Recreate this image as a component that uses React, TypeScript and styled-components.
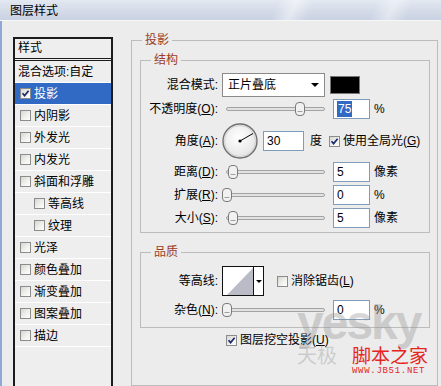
import styled, { createGlobalStyle } from 'styled-components';

const GlobalStyle = createGlobalStyle`
  html, body {
    margin: 0;
    padding: 0;
    background: #ececec;
  }
  body {
    font-family: "Liberation Sans", "Noto Sans CJK SC", sans-serif;
    font-size: 12px;
    color: #000;
  }
  * {
    box-sizing: border-box;
  }
`;

const Window = styled.div`
  position: relative;
  width: 441px;
  height: 386px;
  overflow: hidden;
  background: #ececec;
`;

const TitleBar = styled.div`
  height: 21px;
  padding: 1px 0 0 10px;
  line-height: 20px;
  border-bottom: 1px solid #f7f7f7;
  background:
    linear-gradient(
      112deg,
      transparent 0 62%,
      rgba(255, 255, 255, 0.45) 66%,
      transparent 70% 84%,
      rgba(255, 255, 255, 0.4) 88%,
      transparent 92%
    ),
    linear-gradient(180deg, #e3e8f1 0%, #d4dbe8 55%, #c9d2e3 100%);
`;

const Body = styled.div`
  display: flex;
  height: 365px;
  padding: 12px 0 0 11px;
  border-left: 2px solid #8fa8d8;
`;

const StyleList = styled.div`
  flex-shrink: 0;
  width: 100px;
  margin-top: 4px;
  border: 2px solid #1b1b1b;
  border-bottom: none;
  background: #eeeeee;
`;

const ListHeader = styled.div`
  height: 22px;
  padding-left: 3px;
  line-height: 19px;
  border-bottom: 3px double #1b1b1b;
`;

const ListRow = styled.div<{ $selected?: boolean; $indent?: boolean; $plain?: boolean }>`
  display: flex;
  align-items: center;
  height: 22px;
  padding-left: ${(p) => (p.$plain ? 3 : p.$indent ? 19 : 5)}px;
  line-height: 14px;
  white-space: nowrap;
  border-bottom: 1px solid #ffffff;
  background: ${(p) => (p.$selected ? '#316ac5' : 'transparent')};
  color: ${(p) => (p.$selected ? '#fff' : '#000')};
`;

const Box = styled.span<{ $gap?: number }>`
  display: inline-flex;
  align-items: center;
  justify-content: center;
  flex-shrink: 0;
  width: 11px;
  height: 11px;
  margin-left: ${(p) => p.$gap ?? 0}px;
  margin-right: 3px;
  border: 1px solid #8c8c8c;
  background: linear-gradient(135deg, #d6d6d1 0%, #f2f2ef 60%, #ffffff 100%);
`;

function CheckBox({ checked, gap }: { checked?: boolean; gap?: number }) {
  return (
    <Box $gap={gap}>
      {checked && (
        <svg width="9" height="9" viewBox="0 0 9 9">
          <path d="M1.5 4.2 L3.6 6.6 L7.6 1.8" stroke="#1d2a6e" strokeWidth="1.7" fill="none" />
        </svg>
      )}
    </Box>
  );
}

const RightPanel = styled.div`
  display: flex;
  flex-direction: column;
  margin-left: 18px;
`;

const Group = styled.fieldset<{ $pad: string; $top?: number }>`
  margin: ${(p) => p.$top ?? 0}px 0 0 0;
  min-width: 0;
  padding: ${(p) => p.$pad};
  border: 1px solid #bcbcbc;
`;

const OuterGroup = styled(Group)`
  width: 307px;
  height: 360px;
`;

const Legend = styled.legend`
  margin-left: 2px;
  padding: 0 3px;
  color: #9a3d1f;
  font-size: 12px;
  line-height: 14px;
`;

const Row = styled.div<{ $h: number }>`
  display: flex;
  align-items: center;
  height: ${(p) => p.$h}px;
  line-height: 14px;
  white-space: nowrap;
`;

const Label = styled.span`
  width: 69px;
  text-align: right;
`;

const Select = styled.div`
  display: flex;
  align-items: center;
  justify-content: space-between;
  width: 103px;
  height: 24px;
  margin-left: 4px;
  padding: 0 5px 0 5px;
  border: 1px solid #8a8a8a;
  background: #fff;
`;

const Arrow = styled.span`
  width: 0;
  height: 0;
  border-left: 4px solid transparent;
  border-right: 4px solid transparent;
  border-top: 4px solid #000;
`;

const Swatch = styled.div`
  width: 30px;
  height: 18px;
  margin-left: 5px;
  border: 1px solid #777;
  background: #000;
`;

const Slider = styled.div`
  position: relative;
  display: flex;
  align-items: center;
  width: 103px;
  height: 16px;
  margin-left: 4px;
  padding-left: 4px;
`;

const Track = styled.div`
  width: 100%;
  height: 4px;
  border: 1px solid #a3a3a3;
  border-radius: 2px;
  background: #e2e2e2;
`;

const Thumb = styled.svg<{ $left: number }>`
  position: absolute;
  top: 1px;
  left: ${(p) => p.$left}px;
`;

function SliderControl({ left }: { left: number }) {
  return (
    <Slider>
      <Track />
      <Thumb $left={left} width="10" height="14" viewBox="0 0 10 14">
        <rect x="0.5" y="0.5" width="9" height="13" rx="3.5" fill="#f1f1f1" stroke="#7a7a7a" />
        <line x1="2.5" y1="9.5" x2="7.5" y2="9.5" stroke="#a0a0a0" />
      </Thumb>
    </Slider>
  );
}

const NumberBox = styled.div<{ $w?: number; $gap?: number }>`
  width: ${(p) => p.$w ?? 37}px;
  height: 20px;
  margin-left: ${(p) => p.$gap ?? 8}px;
  padding-left: 3px;
  line-height: 18px;
  border: 1px solid #7f9db9;
  background: #fff;
`;

const Highlight = styled.span`
  padding: 1px 1px;
  background: #316ac5;
  color: #fff;
`;

const Unit = styled.span<{ $gap?: number }>`
  margin-left: ${(p) => p.$gap ?? 4}px;
`;

const Dial = styled.svg`
  margin-left: 4px;
  flex-shrink: 0;
`;

const ContourPicker = styled.div`
  display: flex;
  width: 42px;
  height: 30px;
  margin-left: 4px;
  border: 1px solid #111;
  background: #fff;
`;

const ContourPreview = styled.svg`
  flex: 1;
`;

const ContourArrow = styled.div`
  display: flex;
  align-items: center;
  justify-content: center;
  width: 10px;
  border-left: 1px solid #111;
`;

const SmallArrow = styled.span`
  width: 0;
  height: 0;
  border-left: 3px solid transparent;
  border-right: 3px solid transparent;
  border-top: 3px solid #000;
`;

const KnockoutRow = styled(Row)`
  padding-left: 86px;
`;

const Watermark = styled.div`
  position: absolute;
  left: 297px;
  top: 300px;
  pointer-events: none;
`;

const WmLatin = styled.div`
  font-family: "Liberation Sans", sans-serif;
  font-weight: bold;
  font-size: 48px;
  line-height: 46px;
  color: rgba(150, 150, 150, 0.4);
  letter-spacing: -2px;
`;

const WmLine = styled.div`
  display: flex;
  align-items: flex-start;
  margin-top: -2px;
`;

const WmGray = styled.span`
  width: 55px;
  font-family: "Noto Sans CJK SC", sans-serif;
  font-size: 20px;
  line-height: 22px;
  color: rgba(150, 150, 150, 0.38);
`;

const WmRed = styled.div`
  font-family: "Noto Sans CJK SC", sans-serif;
  font-size: 19px;
  line-height: 22px;
  color: #e5261e;
`;

const WmUrl = styled.div`
  font-family: "Liberation Mono", monospace;
  font-size: 9px;
  line-height: 10px;
  letter-spacing: 0.7px;
  color: #e5261e;
`;

const styleItems = [
  { name: '投影', checked: true, selected: true },
  { name: '内阴影' },
  { name: '外发光' },
  { name: '内发光' },
  { name: '斜面和浮雕' },
  { name: '等高线', indent: true },
  { name: '纹理', indent: true },
  { name: '光泽' },
  { name: '颜色叠加' },
  { name: '渐变叠加' },
  { name: '图案叠加' },
  { name: '描边' },
];

export default function App() {
  return (
    <Window>
      <GlobalStyle />
      <TitleBar>图层样式</TitleBar>
      <Body>
        <StyleList>
          <ListHeader>样式</ListHeader>
          <ListRow $plain>混合选项:自定</ListRow>
          {styleItems.map((item) => (
            <ListRow key={item.name} $selected={item.selected} $indent={item.indent}>
              <CheckBox checked={item.checked} />
              {item.name}
            </ListRow>
          ))}
        </StyleList>

        <RightPanel>
          <OuterGroup $pad="6px 7px 0 8px">
            <Legend>投影</Legend>

            <Group $pad="6px 0 3px 8px">
              <Legend>结构</Legend>
              <Row $h={24}>
                <Label>混合模式:</Label>
                <Select>
                  正片叠底
                  <Arrow />
                </Select>
                <Swatch />
              </Row>
              <Row $h={24}>
                <Label>
                  不透明度(<u>O</u>):
                </Label>
                <SliderControl left={73} />
                <NumberBox>
                  <Highlight>75</Highlight>
                </NumberBox>
                <Unit>%</Unit>
              </Row>
              <Row $h={40}>
                <Label>
                  角度(<u>A</u>):
                </Label>
                <Dial width="36" height="36" viewBox="0 0 36 36">
                  <defs>
                    <radialGradient id="dialFill" cx="45%" cy="40%" r="60%">
                      <stop offset="0%" stopColor="#ffffff" />
                      <stop offset="100%" stopColor="#e4e4e4" />
                    </radialGradient>
                  </defs>
                  <circle cx="18" cy="18" r="17" fill="url(#dialFill)" stroke="#707070" strokeWidth="1.4" />
                  <circle cx="18" cy="18" r="15.5" fill="none" stroke="#d0d0d0" strokeWidth="1" />
                  <line x1="18" y1="18" x2="31" y2="10.5" stroke="#000" strokeWidth="1" />
                  <circle cx="18" cy="18" r="1.6" fill="#000" />
                </Dial>
                <NumberBox $w={41} $gap={5}>30</NumberBox>
                <Unit $gap={6}>度</Unit>
                <CheckBox checked gap={7} />
                <span>
                  使用全局光(<u>G</u>)
                </span>
              </Row>
              <Row $h={22}>
                <Label>
                  距离(<u>D</u>):
                </Label>
                <SliderControl left={6} />
                <NumberBox>5</NumberBox>
                <Unit>像素</Unit>
              </Row>
              <Row $h={24}>
                <Label>
                  扩展(<u>R</u>):
                </Label>
                <SliderControl left={0} />
                <NumberBox>0</NumberBox>
                <Unit>%</Unit>
              </Row>
              <Row $h={22}>
                <Label>
                  大小(<u>S</u>):
                </Label>
                <SliderControl left={6} />
                <NumberBox>5</NumberBox>
                <Unit>像素</Unit>
              </Row>
            </Group>

            <Group $pad="6px 0 4px 8px" $top={12}>
              <Legend>品质</Legend>
              <Row $h={32}>
                <Label>等高线:</Label>
                <ContourPicker>
                  <ContourPreview viewBox="0 0 30 28" preserveAspectRatio="none">
                    <polygon points="4,28 30,1 30,28" fill="#b9bcc6" />
                  </ContourPreview>
                  <ContourArrow>
                    <SmallArrow />
                  </ContourArrow>
                </ContourPicker>
                <CheckBox gap={13} />
                <span>
                  消除锯齿(<u>L</u>)
                </span>
              </Row>
              <Row $h={26}>
                <Label>
                  杂色(<u>N</u>):
                </Label>
                <SliderControl left={0} />
                <NumberBox>0</NumberBox>
                <Unit>%</Unit>
              </Row>
            </Group>

            <KnockoutRow $h={24}>
              <CheckBox checked />
              <span>
                图层挖空投影(<u>U</u>)
              </span>
            </KnockoutRow>
          </OuterGroup>
        </RightPanel>
      </Body>

      <Watermark>
        <WmLatin>yesky</WmLatin>
        <WmLine>
          <WmGray>天极</WmGray>
          <div>
            <WmRed>脚本之家</WmRed>
            <WmUrl>WWW.JB51.NET</WmUrl>
          </div>
        </WmLine>
      </Watermark>
    </Window>
  );
}
